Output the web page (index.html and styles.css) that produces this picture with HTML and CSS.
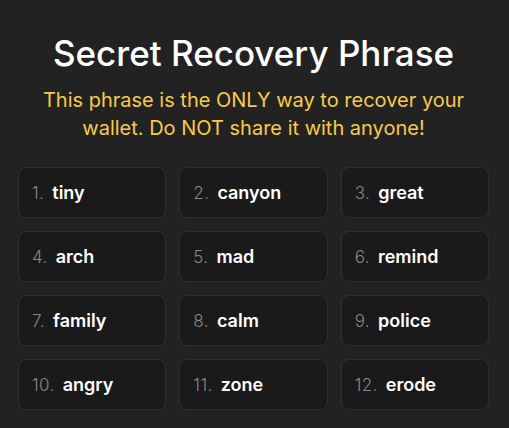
FILE: index.html
```html
<!DOCTYPE html>
<html>
<head>
<meta charset="utf-8">
<link rel="stylesheet" href="styles.css">
</head>
<body>
<main class="page">
  <h1 class="title">Secret Recovery Phrase</h1>
  <p class="warning">This phrase is the ONLY way to recover your wallet. Do NOT share it with anyone!</p>
  <ol class="grid">
    <li class="word"><span class="num">1.</span><span class="text">tiny</span></li>
    <li class="word"><span class="num">2.</span><span class="text">canyon</span></li>
    <li class="word"><span class="num">3.</span><span class="text">great</span></li>
    <li class="word"><span class="num">4.</span><span class="text">arch</span></li>
    <li class="word"><span class="num">5.</span><span class="text">mad</span></li>
    <li class="word"><span class="num">6.</span><span class="text">remind</span></li>
    <li class="word"><span class="num">7.</span><span class="text">family</span></li>
    <li class="word"><span class="num">8.</span><span class="text">calm</span></li>
    <li class="word"><span class="num">9.</span><span class="text">police</span></li>
    <li class="word"><span class="num">10.</span><span class="text">angry</span></li>
    <li class="word"><span class="num">11.</span><span class="text">zone</span></li>
    <li class="word"><span class="num">12.</span><span class="text">erode</span></li>
  </ol>
</main>
</body>
</html>
```
FILE: styles.css
```css
html, body {
  margin: 0;
  padding: 0;
  background: #222222;
}
body {
  font-family: Inter, "Noto Sans", sans-serif;
  color: #ffffff;
}
.page {
  padding: 32px 20px 0 18px;
}
.title {
  margin: 0;
  text-align: center;
  font-size: 35px;
  font-weight: 500;
  line-height: 42px;
  color: #ffffff;
}
.warning {
  margin: 12px 0 0 0;
  text-align: center;
  font-size: 20px;
  line-height: 28px;
  color: #f8ca4a;
  padding: 0 20px;
}
.grid {
  list-style: none;
  margin: 25px 0 0 0;
  padding: 0;
  display: grid;
  grid-template-columns: repeat(3, 1fr);
  gap: 13px 13px;
}
.word {
  box-sizing: border-box;
  height: 51px;
  background: #1a1a1a;
  border: 1px solid #2f2f2f;
  border-radius: 8px;
  display: flex;
  align-items: center;
  padding: 0 13px;
  gap: 8px;
}
.num {
  font-size: 17px;
  font-weight: 300;
  letter-spacing: 0.4px;
  color: #888888;
}
.text {
  font-size: 18px;
  font-weight: 600;
  color: #ffffff;
}
```
